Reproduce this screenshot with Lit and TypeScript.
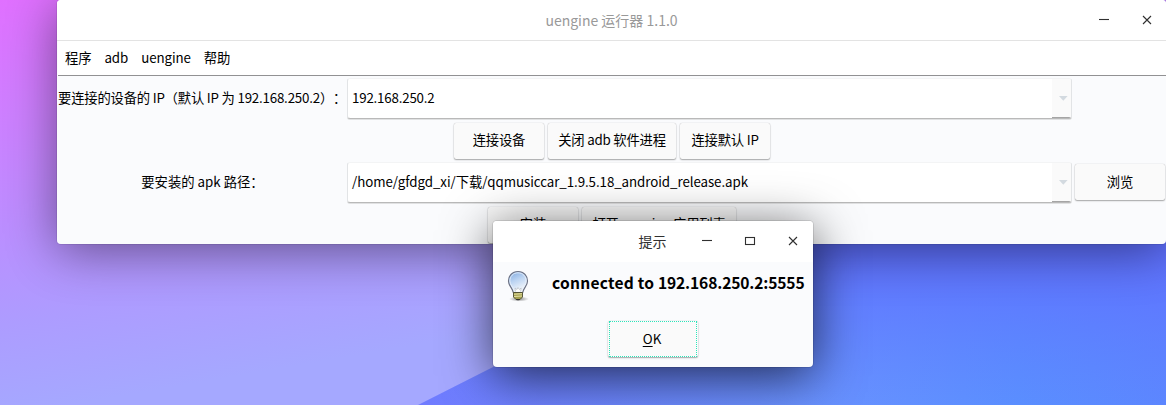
import { LitElement, html, css, svg } from "lit";
import { customElement, property } from "lit/decorators.js";

@customElement("combo-box")
class ComboBox extends LitElement {
  @property() value = "";
  static styles = css`
    :host {
      display: flex;
      box-sizing: border-box;
      height: 41px;
      border-radius: 3px;
      background: #fff;
      overflow: hidden;
      border: 1px solid #e2e4e6;
      border-bottom: 1px solid #b9b9b9;
      border-top-color: #f3f4f5;
      box-shadow: 0 1px 0 #e0e1e2;
    }
    .text { flex: 1; padding-left: 4px; line-height: 37px; white-space: pre; }
    .arrow {
      box-sizing: border-box;
      width: 19px;
      background: #fafafa;
      display: flex;
      align-items: center;
      padding-left: 7px;
      box-shadow: inset 0 -1px 0 #a5a5a5;
    }
  `;
  render() {
    return html`<div class="text">${this.value}</div>
      <div class="arrow">
        <svg width="9" height="5" viewBox="0 0 9 5"><path d="M0 0H8.6L4.3 4.8Z" fill="#d3dae0" /></svg>
      </div>`;
  }
}

@customElement("push-button")
class PushButton extends LitElement {
  static styles = css`
    :host {
      display: block;
      box-sizing: border-box;
      height: 36px;
      line-height: 34px;
      text-align: center;
      background: #fafafa;
      border-radius: 2px;
      box-shadow: 0 0 1px rgba(0, 0, 0, 0.28), 0 1px 1.5px rgba(0, 0, 0, 0.32);
      white-space: pre;
    }
  `;
  render() {
    return html`<slot></slot>`;
  }
}

@customElement("app-root")
class AppRoot extends LitElement {
  static styles = css`
    :host {
      display: block;
      position: relative;
      width: 1166px;
      height: 405px;
      overflow: hidden;
      font: 13.33px "Noto Sans CJK SC", sans-serif;
      color: #000;
    }
    .wallpaper { position: absolute; inset: 0; }
    .window {
      position: absolute;
      left: 57px;
      top: 0;
      width: 1109px;
      height: 244px;
      box-sizing: border-box;
      padding-left: 1px;
      border-radius: 4px;
      background: #fafbfd;
      overflow: hidden;
    }
    .shade {
      position: absolute;
      left: 57px;
      top: 0;
      width: 1109px;
      height: 244px;
      border-radius: 4px;
      box-shadow: 0 0 0 1px rgba(0, 0, 0, 0.08), 0 7px 50px rgba(0, 0, 0, 0.46);
    }
    .title {
      display: grid;
      grid-template-columns: 1fr auto 1fr;
      height: 40px;
      line-height: 40px;
      margin-left: -1px;
      background: #fff;
      border-bottom: 1px solid #e3e3e3;
      font-size: 14px;
      color: #999;
    }
    .title .name { grid-column: 2; }
    .controls { display: flex; justify-content: flex-end; margin-right: -2px; }
    .menu {
      display: flex;
      gap: 13px;
      height: 34px;
      line-height: 33px;
      padding-left: 7px;
      background: #fff;
      border-bottom: 1px solid #919193;
      letter-spacing: -0.1px;
    }
    .form { display: grid; grid-template-columns: 289px 725px 90px; row-gap: 0; }
    .label { text-align: center; line-height: 39px; white-space: pre; }
    .first { padding-top: 2px; }
    .label.first { letter-spacing: -0.2px; text-spacing-trim: space-all; text-align: left; }
    .address { letter-spacing: -0.2px; }
    .path { letter-spacing: -0.07px; }
    .row {
      grid-column: 1 / 4;
      display: flex;
      justify-content: center;
      gap: 4px;
      padding: 4px 0 3px;
      margin-right: -4px;
    }
    .row push-button { letter-spacing: -0.2px; line-height: 33px; }
    .browse { margin: 2px 0 0 3px; width: 90px; letter-spacing: -0.2px; line-height: 35px; }
    .w90 { width: 90px; }
    .w128 { width: 128px; }
    .w154 { width: 154px; }
    .dialog {
      position: absolute;
      left: 493px;
      top: 221px;
      width: 320px;
      height: 146px;
      border-radius: 4px;
      background: #fafbfd;
      box-shadow: 0 0 0 1px rgba(0, 0, 0, 0.1), 0 9px 50px rgba(0, 0, 0, 0.68);
    }
    .bar {
      display: flex;
      height: 41px;
      line-height: 40px;
      justify-content: flex-end;
      background: #fff;
      border-radius: 4px 4px 0 0;
      font-size: 14px;
      color: #303030;
    }
    .bar .name { margin-right: 18.5px; }
    .bar svg:last-child { margin-right: -1px; }
    .message { display: flex; height: 59px; }
    .bulb { margin: 7px 0 0 12px; }
    .message b { margin-left: 21px; font-size: 15.6px; line-height: 41px; white-space: pre; letter-spacing: 0.22px; }
    .message .host { letter-spacing: -0.14px; }
    .ok { width: 90px; margin: 0 auto; }
    .focus { display: block; height: 34px; border: 1px dotted #2ce5ba; margin: 0 1px; line-height: 34px; padding-right: 2px; }
    .focus u { text-underline-offset: 2px; }
  `;

  icon(kind: string) {
    const shapes: Record<string, unknown> = {
      min: svg`<path d="M17 19.5H27" />`,
      max: svg`<rect x="17.5" y="16.5" width="9" height="7" />`,
      close: svg`<path d="M18 16L26 24M26 16L18 24" />`,
    };
    return html`<svg width="43" height="40" fill="none" stroke="#303030" stroke-width="1.1">${shapes[kind]}</svg>`;
  }

  render() {
    return html`
      <svg class="wallpaper" width="1166" height="405">
        <defs>
          <linearGradient id="a" gradientUnits="userSpaceOnUse" x1="0" y1="0" x2="70" y2="405">
            <stop offset="0" stop-color="#e070ff" />
            <stop offset=".25" stop-color="#cf7eff" />
            <stop offset=".55" stop-color="#bb8eff" />
            <stop offset=".78" stop-color="#ad9cff" />
            <stop offset="1" stop-color="#a5a8ff" />
          </linearGradient>
          <linearGradient id="b" gradientUnits="userSpaceOnUse" x1="430" y1="0" x2="1166" y2="0">
            <stop offset="0" stop-color="#707cff" />
            <stop offset=".5" stop-color="#6a92ff" />
            <stop offset=".8" stop-color="#5a8eff" />
            <stop offset="1" stop-color="#5c86ff" />
          </linearGradient>
          <linearGradient id="c" gradientUnits="userSpaceOnUse" x1="0" y1="250" x2="0" y2="405">
            <stop offset="0" stop-color="#5f70ff" />
            <stop offset="1" stop-color="#5f7cff" stop-opacity="0" />
          </linearGradient>
        </defs>
        <rect width="1166" height="405" fill="url(#a)" />
        <path d="M418 405L1166 26V405Z" fill="url(#b)" />
        <path d="M418 405L1166 26V405Z" fill="url(#c)" />
      </svg>
      <div class="shade"></div>
      <div class="window">
        <div class="title">
          <span class="name">uengine 运行器 1.1.0</span>
          <div class="controls">${this.icon("min")}${this.icon("close")}</div>
        </div>
        <div class="menu"><span>程序</span><span>adb</span><span>uengine</span><span>帮助</span></div>
        <div class="form">
          <div class="label first">要连接的设备的 IP（默认 IP 为 192.168.250.2）：</div>
          <div class="first"><combo-box class="address" value="192.168.250.2"></combo-box></div>
          <div></div>
          <div class="row">
            <push-button class="w90">连接设备</push-button>
            <push-button class="w128">关闭 adb 软件进程</push-button>
            <push-button class="w90">连接默认 IP</push-button>
          </div>
          <div class="label">要安装的 apk 路径：</div>
          <combo-box class="path" value="/home/gfdgd_xi/下载/qqmusiccar_1.9.5.18_android_release.apk"></combo-box>
          <push-button class="browse">浏览</push-button>
          <div class="row">
            <push-button class="w90">安装</push-button>
            <push-button class="w154">打开 uengine 应用列表</push-button>
          </div>
        </div>
      </div>
      <div class="dialog">
        <div class="bar">
          <span class="name">提示</span>
          ${this.icon("min")}${this.icon("max")}${this.icon("close")}
        </div>
        <div class="message">
          <svg class="bulb" width="26" height="34" viewBox="0 0 26 34">
            <defs>
              <linearGradient id="g" x1="0" y1="0" x2=".4" y2="1">
                <stop offset="0" stop-color="#7ba6dd" />
                <stop offset=".5" stop-color="#bcd4f2" />
                <stop offset="1" stop-color="#f4f7fb" />
              </linearGradient>
              <radialGradient id="s"><stop offset="0" stop-color="#000" stop-opacity=".45" /><stop offset="1" stop-color="#000" stop-opacity="0" /></radialGradient>
            </defs>
            <ellipse cx="14" cy="30" rx="10" ry="2.6" fill="url(#s)" />
            <path d="M13 2.5C7 2.5 3.5 6.8 3.5 12C3.5 17 7.7 19 8.3 23.5H17.7C18.3 19 22.5 17 22.5 12C22.5 6.8 19 2.5 13 2.5Z" fill="url(#g)" stroke="#6d7284" stroke-width="1.2" />
            <path d="M13 3.8C8 3.8 4.9 7.5 4.9 12C4.9 15.8 8.3 18 9.3 22M13 3.8C18 3.8 21.1 7.5 21.1 12C21.1 15.8 17.7 18 16.7 22" fill="none" stroke="#e6effb" stroke-width=".9" />
            <path d="M10.5 22.5L10 19L12 20.5L13 18.5L14.3 20.5L16.2 19L15.5 22.5" fill="#fff" stroke="#aeb5bd" stroke-width=".6" />
            <path d="M8.5 23.5H17.5V28L15 30.5H11L8.5 28Z" fill="#a5a150" stroke="#4c4c30" stroke-width=".9" />
            <path d="M9 25.2L17 24.7M9 27.5L17 27" stroke="#eeeab0" stroke-width=".9" />
            <path d="M11 30H15L14.2 31.2H11.8Z" fill="#333" />
          </svg>
          <b>connected to <span class="host">192.168.250.2:5555</span></b>
        </div>
        <push-button class="ok"><span class="focus"><u>O</u>K</span></push-button>
      </div>
    `;
  }
}
